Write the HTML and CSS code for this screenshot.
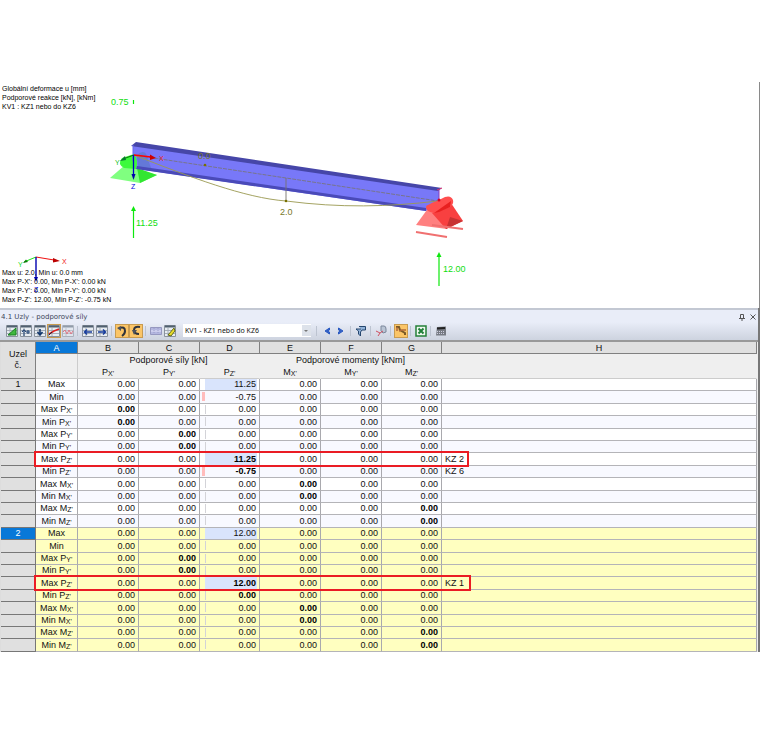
FILE: index.html
```
<!DOCTYPE html>
<html lang="cs">
<head>
<meta charset="utf-8">
<title>Uzly - podporové síly</title>
<link rel="stylesheet" href="styles.css">
</head>
<body>
<main class="app">
<section class="scene">
  <svg class="drawing" viewBox="0 0 760 226" preserveAspectRatio="xMinYMin meet" aria-hidden="true">
    <g transform="translate(0 -82)">
      <path d="M133 145L439 190V207L426 211L137 169L133 160Z" fill="#7878f8"/>
      <path d="M110 178L125 165L157 175L140 183Z" fill="#80ff80"/>
      <path d="M140 183L137 168L157 175Z" fill="#32e632"/>
      <path d="M122 158L134 154Q139 161 136 169L124 168Q117 164 122 158Z" fill="#3cfa3c"/>
      <path d="M137 155Q146 147 148 160L152 170L138 168Z" fill="#6478d8"/>
      <path d="M136 142L442 188L438 191L131 146Z" fill="#4646a8"/>
      <path d="M137 166L426 208V211L136 169Z" fill="#4a4ab8"/>
      <path d="M133 145V161" stroke="#6868e8"/>
      <path d="M439 190V202" stroke="#8c3cba"/>
      <path d="M437 190L442 188" stroke="#e03070"/>
      <path d="M134 155L438 201" fill="none" stroke="#77736e" stroke-width=".8" stroke-dasharray="4 1"/>
      <path d="M134 155C190 177 245 198 286 201C340 208 388 207 438 201" fill="none" stroke="#9a9850" stroke-width=".9"/>
      <path d="M286 178V201" stroke="#77736e" stroke-width=".9"/>
      <circle cx="286" cy="201" r="1.3" fill="#777000"/><circle cx="205" cy="165" r="1.3" fill="#777000"/>
      <path d="M416 225L429 207L446 207L447 229Z" fill="#ff8080"/>
      <path d="M432 213L451 203L463 221L446 229Z" fill="#f84040"/>
      <path d="M446 229L450 217L463 221Z" fill="#c83232"/>
      <path d="M428 205Q433 202 437 201L445 197Q451 195 453 200Q454 204 450 207L434 213Q427 212 426 208Q426 205 428 205Z" fill="#ff4e4e"/>
      <path d="M434 213L451 201L450 207L439 212Z" fill="#e82020"/>
      <path d="M416 232L447 237M432 225L463 229" stroke="#f07070" stroke-width="1.8"/>
      <circle cx="439" cy="200" r="1.5" fill="#e00020"/>
      <g fill="none" stroke="#0ee80e"><path d="M133.500 238V209M439 286V256M133.500 100V104" stroke-width="1.2"/></g>
      <path d="M131 211L133.500 206L136 211ZM436.500 257L439 252L441.500 257Z" fill="#0ee80e"/>
      <path d="M134 155L123 159" stroke="#087808"/><path d="M125 156L120 161L126 160Z" fill="#087830"/>
      <path d="M134 155L151 157" stroke="#f00" stroke-width="1.4"/><path d="M150 154.500L156 158L150 160Z" fill="#c00"/>
      <path d="M133.500 155V176" stroke="#0000c8" stroke-width="1.3"/><path d="M131.500 174H135.500L133.500 180Z" fill="#00a"/>
      <path d="M36 257L24 262" stroke="#20e020"/><path d="M23 263L26 259.500L28 262Z" fill="#087808"/>
      <path d="M36 257L54 260" stroke="#f01010"/><path d="M53 258L60 261L53 262.500Z" fill="#b00"/>
      <path d="M36 257V278" stroke="#0000b0" stroke-width="1.4"/><path d="M34 277H38L36 282Z" fill="#00a"/>
      <g class="axis-names">
        <text x="159" y="161" fill="#f02020">X</text><text x="115" y="165" fill="#20c020">Y</text><text x="131" y="189" fill="#0000e0">Z</text>
        <text x="62" y="264" fill="#f02020">X</text><text x="18" y="267" fill="#20e020">Y</text><text x="34" y="292" fill="#0000e0">Z</text>
      </g>
      <g class="values"><text x="111" y="105">0.75</text><text x="136" y="226">11.25</text><text x="443" y="272">12.00</text>
      <text class="olive" x="280" y="215">2.0</text><text class="olive" x="198" y="159">0.0</text></g>
    </g>
  </svg>
  <div class="legend"><p>Globální deformace u [mm]</p><p>Podporové reakce [kN], [kNm]</p><p>KV1 : KZ1 nebo do KZ6</p></div>
  <div class="legend"><p>Max u: 2.0, Min u: 0.0 mm</p><p>Max P-X': 0.00, Min P-X': 0.00 kN</p><p>Max P-Y': 0.00, Min P-Y': 0.00 kN</p><p>Max P-Z': 12.00, Min P-Z': -0.75 kN</p></div>
</section>
<section class="panel">
  <header class="panel-head">
    <div class="titlebar"><h1>4.1 Uzly - podporové síly</h1>
      <div class="window-buttons">
      <button type="button" aria-label="Připnout"><svg width="6" height="8" viewBox="0 0 6 8"><path d="M1.500 5V1.500H4.500V5M0 5.500H6M3 5V8" fill="none" stroke="#555"/></svg></button>
      <button type="button" aria-label="Zavřít"><svg width="6" height="6" viewBox="0 0 6 6"><path d="M.5.5L5.500 5.500M5.500.5L.5 5.500" stroke="#555"/></svg></button></div>
    </div>
    <div class="toolbar" id="toolbar"></div>
  </header>
  <table class="grid">
    <colgroup><col class="c-node"><col class="c-a"><col class="c-n"><col class="c-n"><col class="c-d"><col class="c-n"><col class="c-n"><col class="c-d"><col></colgroup>
    <thead>
      <tr class="letters"><th rowspan="3" class="node-title">Uzel<br>č.</th><th class="picked">A</th><th>B</th><th>C</th><th>D</th><th>E</th><th>F</th><th>G</th><th>H</th></tr>
      <tr class="groups"><th rowspan="2" class="side first"></th><th colspan="3">Podporové síly [kN]</th><th colspan="3">Podporové momenty [kNm]</th><th rowspan="2" class="side"></th></tr>
      <tr class="units"><th>P<sub>X'</sub></th><th>P<sub>Y'</sub></th><th>P<sub>Z'</sub></th><th>M<sub>X'</sub></th><th>M<sub>Y'</sub></th><th>M<sub>Z'</sub></th></tr>
    </thead>
    <tbody id="rows"></tbody>
  </table>
</section>
</main>
<script src="app.js"></script>
</body>
</html>
```
FILE: styles.css
```
* { box-sizing: border-box; }
body { margin: 0; background: #fff; color: #111; font-family: "Liberation Sans", Arial, sans-serif; font-size: 9px; }
.app { padding-top: 82px; }
h1, p { margin: 0; }
button { border: 0; padding: 0; background: none; display: flex; align-items: center; justify-content: center; }
svg { display: block; }

.scene { position: relative; display: flex; flex-direction: column; justify-content: space-between; min-height: 226px; padding: 2px 2px 4px; border-right: 1px solid #8a8a8a; }
.drawing { position: absolute; left: 0; top: 0; width: 760px; height: 226px; }
.legend { font-size: 7px; line-height: 9px; position: relative; color: #000; }
.axis-names { font-size: 7px; }
.values { font-size: 9px; fill: #10dd10; }
.values .olive { fill: #77772a; }

.panel { border-right: 2px solid #777; }
.panel-head { border-top: 2px solid #c3c8d3; border-bottom: 2px solid #999; background: linear-gradient(#e9edf8 40%, #cdd3df); }
.titlebar { display: flex; justify-content: space-between; align-items: center; height: 13px; padding: 0 2px 0 1px; }
h1 { font: 7px/12px "DejaVu Sans", "Noto Sans", sans-serif; color: #3c4658; }
.window-buttons { display: flex; gap: 5px; }
.toolbar { display: flex; align-items: center; height: 17px; padding: 0 5px 2px; }
.tool { width: 14px; height: 14px; }
.tool.on { background: #fbc567; border: 1px solid #c89b50; }
.sep { width: 1px; height: 10px; margin: 0 3px 0 2px; background: #bcc3d0; }
.toolbar select { width: 128px; height: 13px; margin: 0 3px 0 6px; padding: 0 2px; border: 0; border-radius: 0; appearance: none; background: linear-gradient(#dde2ea, #dde2ea) right / 9px 11px no-repeat #fff; font: 7px/12px "Noto Sans", sans-serif; color: #111; }
.choice { position: relative; }
.choice::after { content: ""; position: absolute; right: 6px; top: 6px; border: 2px solid transparent; border-top-color: #777; pointer-events: none; }

.grid { width: 100%; table-layout: fixed; border-collapse: separate; border-spacing: 0; border-left: 1px solid #ddd; border-right: 1px solid #eee; }
.c-node { width: 35px; } .c-a { width: 42px; } .c-n { width: 61px; } .c-d { width: 60px; }
.grid th, .grid td { padding: 0; font-weight: 400; line-height: 11px; height: 12px; border-right: 1px solid #a9a9ae; border-bottom: 1px solid #b4b4b8; white-space: nowrap; }
.grid th { background: #efefef; }
.grid sub { font-size: 7px; line-height: 0; vertical-align: -1px; }
.grid .letters th { background: #e0e0e0; border-color: #808080; height: 12px; line-height: 10px; }
.grid .letters .picked { background: #0878d8; color: #fff; }
.grid .letters .node-title { line-height: 11px; border-bottom-color: #808080; }
.grid .groups th { height: 12px; border-bottom: 0; border-color: #efefef; }
.grid .units th { height: 13px; border-right-color: #efefef; border-bottom-color: #ccc; }
.grid .groups .side { border-bottom: 1px solid #ccc; }
.grid .groups .first { border-right-color: #ccc; }
tbody tr { position: relative; background: #fff; }
tbody tr:nth-child(even) { background: #f8f9ff; }
tbody tr.second { background: #ffffc0; }
tbody tr:nth-child(5n+2) td, tbody tr:nth-child(5n+2) th,
tbody tr:nth-child(5n+4) td, tbody tr:nth-child(5n+4) th { height: 13px; line-height: 12px; }
.grid tbody .node { background: #e0e0e0; border-color: #777; }
.grid tbody .node.current { background: #0878d8; color: #fff; }
.name { text-align: center; }
.grid .num { text-align: right; padding-right: 3px; }
.grid .best { font-weight: 700; color: #000; }
.bar { background: linear-gradient(#d3d3d8, #d3d3d8) 5px 1px / 1px 9px no-repeat; }
.bar.plus { background: linear-gradient(#d9e4fc, #d9e4fc) 5px 0 / 52px 100% no-repeat; }
.bar.minus { background: linear-gradient(#ffbcbc, #ffbcbc) 2px 1px / 3px 9px no-repeat; }
.grid .note { padding-left: 3px; }
.frame { position: absolute; z-index: 1; left: 33px; top: -2px; bottom: -1px; width: 435px; border: 2px solid #ea1c24; }
.second .frame { width: 437px; }
```
FILE: app.js
```
const svg = (body) => `<svg width="12" height="12" viewBox="0 0 12 12" fill="none">${body}</svg>`;
const sheet = '<path d="M.5.500H11.500V11.500H.5Z" fill="#e8edf2" stroke="#8a929c"/><path d="M1 1.500H11" stroke="#506070" stroke-width="2"/><path d="M1 5.500H11M1 8.500H11M4 3V11" stroke="#a4adb8"/>';
const icons = {
  support: sheet + '<path d="M2 10L10 3V10Z" fill="#40b840" stroke="#188020"/>',
  sort: sheet + '<path d="M4 11V5M2 7L4 4.500L6 7M6 7H10M8 5V9" stroke="#14386c"/>',
  down: sheet + '<path d="M6 4V10M3.500 7L6 10L8.500 7" stroke="#14386c" stroke-width="1.600"/>',
  graph: sheet + '<path d="M1 9L6 6L11 4" stroke="#e02020" stroke-width="1.500"/><path d="M1 10L4 7" stroke="#223"/>',
  wave: '<g opacity=".55">' + sheet + '<path d="M1 7L3 5L5 9L7 5L9 9L11 6" stroke="#e02030"/></g>',
  left: sheet + '<path d="M10 7H3M5 4.500L2.500 7L5 9.500" stroke="#173c9c" stroke-width="1.500"/>',
  right: sheet + '<path d="M2 7H9M7 4.500L9.500 7L7 9.500" stroke="#173c9c" stroke-width="1.500"/>',
  curl: '<path d="M3 3Q9 1 9 6Q9 9 6 11" stroke="#30343c" stroke-width="2"/><path d="M1 3L5 1V6Z" fill="#4c525c"/>',
  curl2: '<path d="M10 2Q4 1 4 5Q4 9 9 9" stroke="#30343c" stroke-width="2"/><path d="M2 5L7 5L4 10Z" fill="#4c525c"/>',
  lines: '<path d="M.5 2.500H11.500V9.500H.5Z" fill="#b4b7e0" stroke="#9698c0"/><path d="M1 6H11" stroke="#e4e4fa"/><path d="M4 3V9M8 3V9" stroke="#9a9cc8" stroke-dasharray="1 1"/>',
  edit: sheet + '<path d="M4 10L10 3L11 6L7 11Z" fill="#e8dc28" stroke="#606820"/>',
  prev: '<path d="M8.500 3L4 6L8.500 9V7L6 6L8.500 5Z" fill="#3a67cc" stroke="#2858c0"/>',
  next: '<path d="M3.500 3L8 6L3.500 9V7L6 6L3.500 5Z" fill="#3a67cc" stroke="#2858c0"/>',
  filter: '<path d="M4 1.500H10.500V5H7L5.500 7V11L3.500 9V6L1 4H6" fill="#8fb1d8" stroke="#25466e"/>',
  probe: '<path d="M6 1H9Q11 1 11 4V7L8 8L6 6Z" fill="#bac5d5" stroke="#7b879b"/><path d="M1 6L5 8L3 11M5 8L8 6" stroke="#d05060"/>',
  beam: '<path d="M1 2H4L5 5L10 8V10" stroke="#7a5a28" stroke-width="2"/><path d="M4 6L7 5H11M2 2V6" stroke="#b06838" stroke-width="1.500"/>',
  excel: '<path d="M1 1H11V11H1Z" fill="#f0f8f0" stroke="#258038" stroke-width="1.500"/><path d="M3.500 3.500L8.500 8.500M8.500 3.500L3.500 8.500" stroke="#208038" stroke-width="2"/>',
  calc: '<path d="M2 2L11 1.500V10.500H1Z" fill="#777b83"/><path d="M2 3.500L10 3" stroke="#222" stroke-width="2"/><path d="M2 6.500H10M2 8.500H10" stroke="#ccd" stroke-dasharray="1 1"/>'
};
const items = ['support', 'sort', 'down', '*graph', 'wave', '|', 'left', 'right', '|', '*curl', '*curl2', '|', 'lines', 'edit', 'select', '|', 'prev', 'next', '|', 'filter', '|', 'probe', '|', '*beam', '|', 'excel', '|', 'calc'];
document.getElementById('toolbar').innerHTML = items.map((i) => {
  if (i === '|') return '<span class="sep"></span>';
  if (i === 'select') return '<label class="choice"><select aria-label="Zatížení"><option>KV1 - KZ1 nebo do KZ6</option></select></label>';
  const name = i.replace('*', '');
  return `<button type="button" class="tool${i[0] === '*' ? ' on' : ''}" aria-label="${name}">${svg(icons[name])}</button>`;
}).join('');

const components = ['PX', 'PY', 'PZ', 'MX', 'MY', 'MZ'];
const build = (id, list, peaks, notes) => {
  const row = (label, i, best, value) => {
    const node = i === 0 ? id : '';
    const marked = best === 'PZ' && label.startsWith('Max');
    const cells = components.map((c) => {
      const v = c === 'PZ' ? value : '0.00';
      const bar = c !== 'PZ' ? '' : v === '0.00' ? ' bar' : v[0] === '-' ? ' bar minus' : ' bar plus';
      return `<td class="num${c === best ? ' best' : ''}${bar}">${v}</td>`;
    }).join('');
    return `<tr class="${id === 2 ? 'second' : ''}"><th class="node${node === 2 ? ' current' : ''}">${node}</th><td class="name">${label}${marked ? '<span class="frame"></span>' : ''}</td>${cells}<td class="note">${notes[label.slice(0, 3) + best] || ''}</td></tr>`;
  };
  let out = row('Max', 0, '', peaks[0]) + row('Min', 1, '', peaks[1]);
  list.forEach((c) => ['Max', 'Min'].forEach((m, k) => {
    out += row(`${m} ${c[0]}<sub>${c[1]}'</sub>`, 2, c, c === 'PZ' ? peaks[k] : '0.00');
  }));
  return out;
};
document.getElementById('rows').innerHTML =
  build(1, ['PX', 'PY', 'PZ', 'MX', 'MZ'], ['11.25', '-0.75'], { MaxPZ: 'KZ 2', MinPZ: 'KZ 6' }) +
  build(2, ['PY', 'PZ', 'MX', 'MZ'], ['12.00', '0.00'], { MaxPZ: 'KZ 1' });
```
